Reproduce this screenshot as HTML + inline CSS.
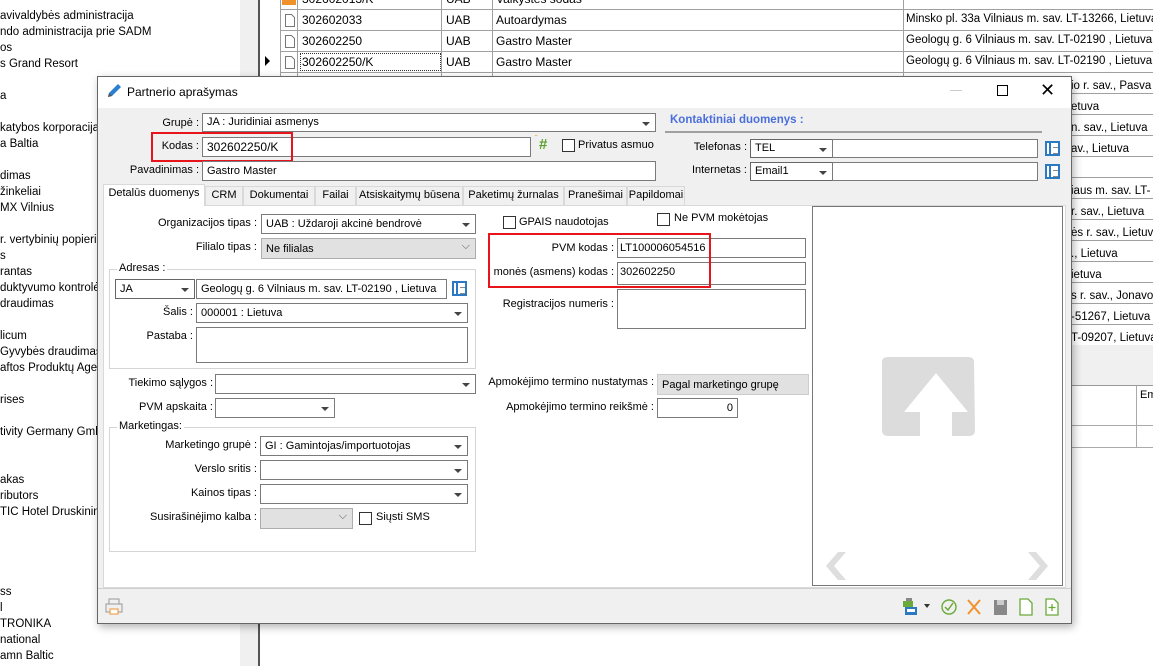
<!DOCTYPE html>
<html><head><meta charset="utf-8"><style>
*{box-sizing:border-box;margin:0;padding:0}
body{width:1153px;height:666px;overflow:hidden;background:#fff;font-family:"Liberation Sans",sans-serif;font-size:11px;color:#000;position:relative}
.a{position:absolute;white-space:nowrap}
.bx{position:absolute;background:#fff;border:1px solid #7a7a7a}
.cb{position:absolute;width:13px;height:13px;border:1px solid #333;background:#fff}
.dd:after{content:"";position:absolute;right:5px;top:50%;margin-top:-1px;border-left:4px solid transparent;border-right:4px solid transparent;border-top:4px solid #444}
.lb{position:absolute;white-space:nowrap;text-align:right;margin-top:1px}
.tx{position:absolute;left:4px;top:3px;white-space:nowrap}
.grp{position:absolute;border:1px solid #d5d5d5}
.tab{position:absolute;top:186px;height:19px;border:1px solid #d9d9d9;border-bottom:none;background:#f0f0f0;text-align:center;line-height:17px;white-space:nowrap;overflow:hidden}
.row{position:absolute;left:280px;width:873px;height:1px;background:#a0a0a0}
.ico{position:absolute;width:15px;height:15px;border:2px solid #2b79c2;background:#fff}
.ico:before{content:"";position:absolute;left:2px;top:0;width:2px;height:11px;background:#2b79c2}
.ico:after{content:"";position:absolute;left:6px;top:4px;width:5px;height:5px;border-top:1px solid #888;border-bottom:1px solid #888}
</style></head><body>
<div class="a" style="left:0;top:8px;line-height:16px;font-size:11.5px">avivaldybės administracija<br>ndo administracija prie SADM<br>os<br>s Grand Resort<br><br>a<br><br>katybos korporacija<br>a Baltia<br><br>dimas<br>žinkeliai<br>MX Vilnius<br><br>r. vertybinių popierių<br>s<br>rantas<br>duktyvumo kontrolė<br>draudimas<br><br>licum<br>Gyvybės draudimas<br>aftos Produktų Agent<br><br>rises<br><br>tivity Germany GmbH<br><br><br>akas<br>ributors<br>TIC Hotel Druskininkai<br><br><br><br><br>ss<br>l<br>TRONIKA<br>national<br>amn Baltic</div>
<div class="a" style="left:240px;top:0;width:18px;height:666px;background:#f0f0f0"></div>
<div class="a" style="left:258px;top:0;width:2px;height:666px;background:#555"></div>
<div class="a" style="left:280px;top:0;width:1px;height:345px;background:#a0a0a0"></div>
<div class="a" style="left:297px;top:0;width:1px;height:345px;background:#a0a0a0"></div>
<div class="a" style="left:441px;top:0;width:1px;height:345px;background:#a0a0a0"></div>
<div class="a" style="left:492px;top:0;width:1px;height:345px;background:#a0a0a0"></div>
<div class="a" style="left:903px;top:0;width:1px;height:345px;background:#a0a0a0"></div>
<div class="row" style="top:9px"></div><div class="row" style="top:30px"></div><div class="row" style="top:51px"></div><div class="row" style="top:72px"></div><div class="row" style="top:93px"></div><div class="row" style="top:114px"></div><div class="row" style="top:135px"></div><div class="row" style="top:156px"></div><div class="row" style="top:177px"></div><div class="row" style="top:198px"></div><div class="row" style="top:219px"></div><div class="row" style="top:240px"></div><div class="row" style="top:261px"></div><div class="row" style="top:282px"></div><div class="row" style="top:303px"></div><div class="row" style="top:324px"></div>
<div class="a" style="left:282px;top:-7px;width:14px;height:12px;background:#f0922b"></div>
<div class="a" style="left:302px;top:-8px;font-size:12px">302602013/K</div><div class="a" style="left:446px;top:-8px;font-size:12px">UAB</div><div class="a" style="left:496px;top:-8px;font-size:12px">Vaikystės sodas</div>
<div class="a" style="left:302px;top:13px;font-size:12px">302602033</div><div class="a" style="left:446px;top:13px;font-size:12px">UAB</div><div class="a" style="left:496px;top:13px;font-size:12px">Autoardymas</div><div class="a" style="left:906px;top:13px;font-size:11.5px">Minsko pl. 33a Vilniaus m. sav. LT-13266, Lietuva</div>
<div class="a" style="left:302px;top:34px;font-size:12px">302602250</div><div class="a" style="left:446px;top:34px;font-size:12px">UAB</div><div class="a" style="left:496px;top:34px;font-size:12px">Gastro Master</div><div class="a" style="left:906px;top:34px;font-size:11.5px">Geologų g. 6 Vilniaus m. sav. LT-02190 , Lietuva</div>
<div class="a" style="left:300px;top:53px;width:141px;height:18px;border:1px dotted #333"></div>
<div class="a" style="left:302px;top:55px;font-size:12px">302602250/K</div><div class="a" style="left:446px;top:55px;font-size:12px">UAB</div><div class="a" style="left:496px;top:55px;font-size:12px">Gastro Master</div><div class="a" style="left:906px;top:55px;font-size:11.5px">Geologų g. 6 Vilniaus m. sav. LT-02190 , Lietuva</div>
<div class="a" style="left:265px;top:56px;border-top:5px solid transparent;border-bottom:5px solid transparent;border-left:5px solid #000"></div>
<svg class="a" style="left:284px;top:13px" width="12" height="60" viewBox="0 0 12 60"><g fill="none" stroke="#777"><path d="M1.5 1.5h6l3 3v9h-9z"/><path d="M1.5 22.5h6l3 3v9h-9z"/><path d="M1.5 43.5h6l3 3v9h-9z"/></g></svg>
<div class="a" style="left:1071px;top:76px;line-height:21px;font-size:11.5px">io r. sav., Pasva<br>etuva<br>n. sav., Lietuva<br>av., Lietuva<br><br>iaus m. sav. LT-<br>r. sav., Lietuva<br>ės r. sav., Lietuva<br>., Lietuva<br>ietuva<br>s r. sav., Jonavo<br>-51267, Lietuva<br>T-09207, Lietuva</div>
<div class="a" style="left:1071px;top:345px;width:82px;height:40px;background:#f0f0f0"></div>
<div class="a" style="left:1071px;top:385px;width:82px;height:1px;background:#999"></div>
<div class="a" style="left:1071px;top:425px;width:82px;height:1px;background:#aaa"></div>
<div class="a" style="left:1071px;top:447px;width:82px;height:1px;background:#aaa"></div>
<div class="a" style="left:1136px;top:386px;width:1px;height:61px;background:#aaa"></div>
<div class="a" style="left:1140px;top:389px">Em</div>
<div class="a" style="left:97px;top:76px;width:975px;height:548px;background:#f0f0f0;border:1px solid #666;box-shadow:2px 3px 8px rgba(0,0,0,.3)">
<div class="a" style="left:0;top:0;width:973px;height:31px;background:#fff"></div>
</div>
<svg class="a" style="left:105px;top:82px" width="18" height="18" viewBox="0 0 18 18"><path d="M3 15 L4 11 L13 2 L16 5 L7 14 Z" fill="#2b7fd0"/><path d="M3 15 L4 11 L7 14Z" fill="#555"/></svg>
<div class="a" style="left:127px;top:85px;font-size:12px">Partnerio aprašymas</div>
<div class="a" style="left:950px;top:90px;width:12px;height:1px;background:#ccc"></div>
<div class="a" style="left:997px;top:85px;width:11px;height:11px;border:1px solid #000"></div>
<div class="a" style="left:1040px;top:80px;font-size:18px;font-weight:300">✕</div>
<div class="lb" style="right:954px;top:116px">Grupė :</div>
<div class="bx dd" style="left:202px;top:113px;width:454px;height:19px"><span class="tx" style="top:2px">JA : Juridiniai asmenys</span></div>
<div class="lb" style="right:954px;top:139px">Kodas :</div>
<div class="bx" style="left:202px;top:137px;width:329px;height:20px"><span class="tx" style="top:2px;font-size:12px">302602250/K</span></div>
<div class="a" style="left:151px;top:132px;width:142px;height:30px;border:2px solid #e8141b"></div>
<div class="a" style="left:539px;top:136px;color:#5aa02c;font-weight:bold;font-size:15px">#</div>
<div class="a" style="left:535px;top:134px;color:#e8a030;font-size:8px">˘</div>
<div class="cb" style="left:562px;top:139px"></div><div class="a" style="left:578px;top:139px">Privatus asmuo</div>
<div class="lb" style="right:954px;top:163px">Pavadinimas :</div>
<div class="bx" style="left:202px;top:161px;width:454px;height:20px"><span class="tx">Gastro Master</span></div>
<div class="a" style="left:670px;top:114px;color:#4a6fdc;font-weight:bold;font-size:11.5px">Kontaktiniai duomenys :</div>
<div class="a" style="left:665px;top:131px;width:377px;height:2px;background:#a0a0a0"></div>
<div class="lb" style="right:406px;top:140px">Telefonas :</div>
<div class="bx dd" style="left:750px;top:139px;width:83px;height:19px;border-color:#666"><span class="tx" style="top:2px">TEL</span></div>
<div class="bx" style="left:832px;top:139px;width:206px;height:19px"></div>
<div class="ico" style="left:1045px;top:141px"></div>
<div class="lb" style="right:406px;top:163px">Internetas :</div>
<div class="bx dd" style="left:750px;top:162px;width:83px;height:19px;border-color:#666"><span class="tx" style="top:2px">Email1</span></div>
<div class="bx" style="left:832px;top:162px;width:206px;height:19px"></div>
<div class="ico" style="left:1045px;top:164px"></div>
<div class="a" style="left:103px;top:205px;width:963px;height:383px;background:#fff;border:1px solid #d9d9d9"></div>
<div class="tab" style="left:103px;width:102px;top:184px;height:22px;background:#fff">Detalūs duomenys</div>
<div class="tab" style="left:205px;width:38px">CRM</div>
<div class="tab" style="left:243px;width:72px">Dokumentai</div>
<div class="tab" style="left:315px;width:41px">Failai</div>
<div class="tab" style="left:356px;width:107px">Atsiskaitymų būsena</div>
<div class="tab" style="left:463px;width:101px">Paketimų žurnalas</div>
<div class="tab" style="left:564px;width:63px">Pranešimai</div>
<div class="tab" style="left:627px;width:58px">Papildomai</div>
<div class="lb" style="right:896px;top:216px">Organizacijos tipas :</div>
<div class="bx dd" style="left:261px;top:214px;width:215px;height:20px"><span class="tx">UAB : Uždaroji akcinė bendrovė</span></div>
<div class="lb" style="right:896px;top:240px">Filialo tipas :</div>
<div class="bx" style="left:261px;top:238px;width:215px;height:21px;background:#e1e1e1;border-color:#adadad"><span class="tx" style="top:4px">Ne filialas</span><span class="a" style="right:5px;top:1px;font-size:11px;color:#555">⌵</span></div>
<div class="grp" style="left:109px;top:269px;width:367px;height:100px"></div>
<div class="a" style="left:117px;top:262px;background:#fff;padding:0 2px">Adresas :</div>
<div class="bx dd" style="left:115px;top:279px;width:80px;height:20px;border-color:#666"><span class="tx">JA</span></div>
<div class="bx" style="left:196px;top:279px;width:251px;height:20px"><span class="tx">Geologų g. 6 Vilniaus m. sav. LT-02190 , Lietuva</span></div>
<div class="ico" style="left:452px;top:281px"></div>
<div class="lb" style="right:960px;top:305px">Šalis :</div>
<div class="bx dd" style="left:196px;top:303px;width:272px;height:20px"><span class="tx">000001 : Lietuva</span></div>
<div class="lb" style="right:960px;top:329px">Pastaba :</div>
<div class="bx" style="left:196px;top:327px;width:272px;height:36px"></div>
<div class="lb" style="right:940px;top:376px">Tiekimo sąlygos :</div>
<div class="bx dd" style="left:215px;top:374px;width:261px;height:20px"></div>
<div class="lb" style="right:940px;top:400px">PVM apskaita :</div>
<div class="bx dd" style="left:215px;top:398px;width:120px;height:20px"></div>
<div class="grp" style="left:109px;top:427px;width:367px;height:125px"></div>
<div class="a" style="left:117px;top:420px;background:#fff;padding:0 2px">Marketingas:</div>
<div class="lb" style="right:896px;top:438px">Marketingo grupė :</div>
<div class="bx dd" style="left:260px;top:436px;width:208px;height:20px"><span class="tx">GI : Gamintojas/importuotojas</span></div>
<div class="lb" style="right:896px;top:462px">Verslo sritis :</div>
<div class="bx dd" style="left:260px;top:460px;width:208px;height:20px"></div>
<div class="lb" style="right:896px;top:486px">Kainos tipas :</div>
<div class="bx dd" style="left:260px;top:484px;width:208px;height:20px"></div>
<div class="lb" style="right:896px;top:510px">Susirašinėjimo kalba :</div>
<div class="bx" style="left:260px;top:508px;width:93px;height:21px;background:#e1e1e1;border-color:#adadad"><span class="a" style="right:5px;top:1px;font-size:11px;color:#555">⌵</span></div>
<div class="cb" style="left:359px;top:512px"></div><div class="a" style="left:376px;top:511px">Siųsti SMS</div>
<div class="cb" style="left:503px;top:216px"></div><div class="a" style="left:519px;top:216px">GPAIS naudotojas</div>
<div class="cb" style="left:657px;top:213px"></div><div class="a" style="left:674px;top:212px">Ne PVM mokėtojas</div>
<div class="lb" style="right:539px;top:241px">PVM kodas :</div>
<div class="bx" style="left:617px;top:238px;width:189px;height:20px"><span class="tx" style="left:2px">LT100006054516</span></div>
<div class="lb" style="right:539px;top:265px">monės (asmens) kodas :</div>
<div class="bx" style="left:617px;top:262px;width:189px;height:23px"><span class="tx" style="left:2px;top:3px">302602250</span></div>
<div class="a" style="left:488px;top:233px;width:223px;height:55px;border:2px solid #e8141b"></div>
<div class="lb" style="right:539px;top:297px">Registracijos numeris :</div>
<div class="bx" style="left:617px;top:289px;width:189px;height:40px"></div>
<div class="lb" style="right:499px;top:375px">Apmokėjimo termino nustatymas :</div>
<div class="a" style="left:657px;top:374px;width:152px;height:21px;background:#e1e1e1;border:1px solid #ccc;padding:4px 0 0 4px">Pagal marketingo grupę</div>
<div class="lb" style="right:499px;top:400px">Apmokėjimo termino reikšmė :</div>
<div class="bx" style="left:657px;top:398px;width:81px;height:20px"><span class="a" style="right:4px;top:3px">0</span></div>
<div class="a" style="left:812px;top:206px;width:251px;height:380px;background:#fff;border:1px solid #777"></div>
<svg class="a" style="left:790px;top:350px" width="300" height="240" viewBox="790 350 300 240">
<path d="M882 362 Q882 357 888 357 L968 357 Q974 357 974 362 L975 430 Q975 436 969 436 L952 436 L952 412 L968 412 L936 373 L904 412 L920 412 L920 436 L888 436 Q882 436 882 430 Z" fill="#dcdcdc"/>
<path d="M838 552 L826 566 L838 580 L846 580 L834 566 L846 552 Z" fill="#dedede"/>
<path d="M1036 552 L1048 566 L1036 580 L1028 580 L1040 566 L1028 552 Z" fill="#dedede"/>
</svg>
<div class="a" style="left:98px;top:588px;width:973px;height:1px;background:#d0d0d0"></div>
<svg class="a" style="left:105px;top:598px" width="18" height="18" viewBox="0 0 18 18"><rect x="4" y="1" width="10" height="5" fill="none" stroke="#999"/><rect x="1" y="6" width="16" height="8" fill="none" stroke="#999"/><rect x="5" y="11" width="8" height="5" fill="#fff" stroke="#f0922b"/></svg>
<svg class="a" style="left:900px;top:597px" width="165" height="20" viewBox="0 0 165 20">
<rect x="3" y="4" width="10" height="6" fill="#6aaa3a"/><rect x="6" y="1" width="6" height="3" fill="#888"/><rect x="5" y="10" width="12" height="8" fill="#2b79c2"/><rect x="7" y="12" width="8" height="3" fill="#fff"/>
<path d="M24 7 L30 7 L27 11Z" fill="#333"/>
<circle cx="49" cy="10" r="7" fill="none" stroke="#6aaa3a" stroke-width="1.4"/><path d="M45 10 L48 13 L53 6" fill="none" stroke="#6aaa3a" stroke-width="1.5"/>
<path d="M68 3 L80 17 M80 3 L68 17" stroke="#f0922b" stroke-width="2"/>
<rect x="94" y="3" width="13" height="15" fill="#888"/><rect x="97" y="3" width="7" height="5" fill="#ccc"/>
<path d="M120 2 L128 2 L132 6 L132 18 L120 18Z" fill="#fff" stroke="#6aaa3a" stroke-width="1.3"/>
<path d="M146 2 L154 2 L158 6 L158 18 L146 18Z" fill="#fff" stroke="#6aaa3a" stroke-width="1.3"/><path d="M152 7 V14 M148.5 10.5 H155.5" stroke="#6aaa3a" stroke-width="1.3"/>
</svg>
</body></html>
